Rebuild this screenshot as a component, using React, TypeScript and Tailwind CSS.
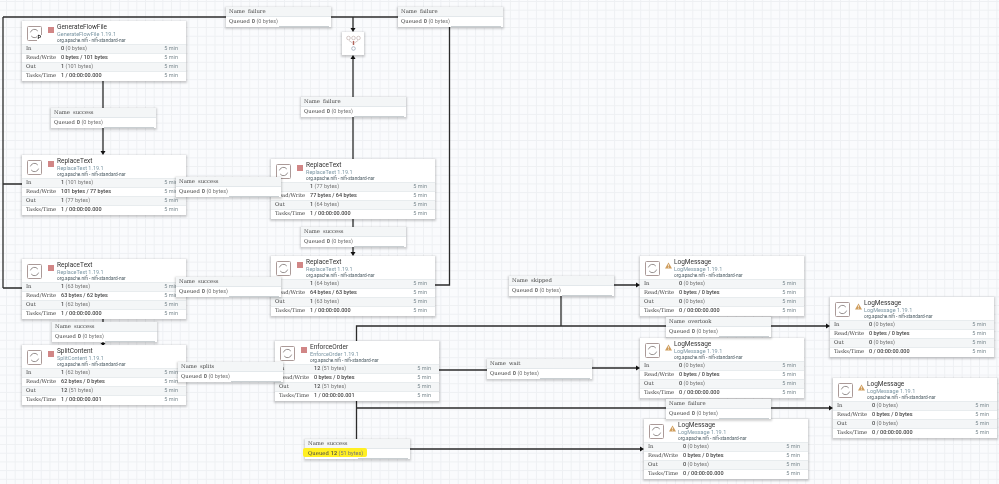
type ProcessorProps = {
  x: number;
  y: number;
  name: string;
  stats: string[][];
  warn?: boolean;
  primary?: boolean;
};

const processors: ProcessorProps[] = [
  { x: 22, y: 21, name: "GenerateFlowFile", primary: true, stats: [["0", "(0 bytes)"], ["0 bytes / 101 bytes"], ["1", "(101 bytes)"], ["1 / 00:00:00.000"]] },
  { x: 22, y: 155, name: "ReplaceText", stats: [["1", "(101 bytes)"], ["101 bytes / 77 bytes"], ["1", "(77 bytes)"], ["1 / 00:00:00.000"]] },
  { x: 22, y: 259, name: "ReplaceText", stats: [["1", "(63 bytes)"], ["63 bytes / 62 bytes"], ["1", "(62 bytes)"], ["1 / 00:00:00.000"]] },
  { x: 22, y: 345, name: "SplitContent", stats: [["1", "(62 bytes)"], ["62 bytes / 0 bytes"], ["12", "(51 bytes)"], ["1 / 00:00:00.001"]] },
  { x: 271, y: 159, name: "ReplaceText", stats: [["1", "(77 bytes)"], ["77 bytes / 64 bytes"], ["1", "(64 bytes)"], ["1 / 00:00:00.000"]] },
  { x: 271, y: 256, name: "ReplaceText", stats: [["1", "(64 bytes)"], ["64 bytes / 63 bytes"], ["1", "(63 bytes)"], ["1 / 00:00:00.000"]] },
  { x: 275, y: 341, name: "EnforceOrder", stats: [["12", "(51 bytes)"], ["0 bytes / 0 bytes"], ["12", "(51 bytes)"], ["1 / 00:00:00.001"]] },
  { x: 640, y: 256, name: "LogMessage", warn: true, stats: [["0", "(0 bytes)"], ["0 bytes / 0 bytes"], ["0", "(0 bytes)"], ["0 / 00:00:00.000"]] },
  { x: 640, y: 338, name: "LogMessage", warn: true, stats: [["0", "(0 bytes)"], ["0 bytes / 0 bytes"], ["0", "(0 bytes)"], ["0 / 00:00:00.000"]] },
  { x: 644, y: 419, name: "LogMessage", warn: true, stats: [["0", "(0 bytes)"], ["0 bytes / 0 bytes"], ["0", "(0 bytes)"], ["0 / 00:00:00.000"]] },
  { x: 830, y: 297, name: "LogMessage", warn: true, stats: [["0", "(0 bytes)"], ["0 bytes / 0 bytes"], ["0", "(0 bytes)"], ["0 / 00:00:00.000"]] },
  { x: 833, y: 378, name: "LogMessage", warn: true, stats: [["0", "(0 bytes)"], ["0 bytes / 0 bytes"], ["0", "(0 bytes)"], ["0 / 00:00:00.000"]] },
];

const connections = [
  { x: 226, y: 7, name: "failure" },
  { x: 398, y: 7, name: "failure" },
  { x: 51, y: 108, name: "success" },
  { x: 176, y: 177, name: "success" },
  { x: 176, y: 277, name: "success" },
  { x: 52, y: 322, name: "success" },
  { x: 178, y: 362, name: "splits" },
  { x: 301, y: 97, name: "failure" },
  { x: 301, y: 227, name: "success" },
  { x: 509, y: 276, name: "skipped" },
  { x: 666, y: 317, name: "overtook" },
  { x: 487, y: 359, name: "wait" },
  { x: 666, y: 399, name: "failure" },
  { x: 305, y: 439, name: "success", queued: "12", bytes: "(51 bytes)", marked: true },
];

const rowLabels = ["In", "Read/Write", "Out", "Tasks/Time"];

function ProcessorIcon() {
  return (
    <svg width="15" height="15" viewBox="0 0 15 15" fill="none" className="shrink-0">
      <rect x="0.5" y="0.5" width="14" height="14" rx="1" stroke="#ab9a98" strokeWidth="1" />
      <path d="M3.4 6.4A4.2 4.2 0 0 1 10.8 5" stroke="#8b8583" strokeWidth="0.9" />
      <path d="M11.6 8.6A4.2 4.2 0 0 1 4.2 10" stroke="#8b8583" strokeWidth="0.9" />
    </svg>
  );
}

function Processor({ x, y, name, stats, warn, primary }: ProcessorProps) {
  return (
    <div
      className="absolute flex h-[60px] w-[164px] flex-col bg-white shadow-[0_1px_2px_1px_rgba(0,0,0,0.2)]"
      style={{ left: x, top: y }}
    >
      <div className="relative flex h-[23px] shrink-0 pl-[5px] pt-[5px]">
        <ProcessorIcon />
        {primary && (
          <span className="absolute left-[15px] top-[14px] bg-white px-[0.5px] font-['Roboto',sans-serif] text-[5.5px] leading-none font-bold text-[#222]">
            P
          </span>
        )}
        {warn ? (
          <svg width="7" height="7" viewBox="0 0 8 7" className="mt-[1px] ml-[5px] shrink-0">
            <path d="M4 0 8 7H0Z" fill="#cf9d5c" />
            <path d="M4 2.2V4.6M4 5.2V6" stroke="#fff" strokeWidth="0.8" />
          </svg>
        ) : (
          <span className="mt-[1px] ml-[6px] h-[6px] w-[6px] shrink-0 bg-[#d18686]" />
        )}
        <div className={warn ? "ml-[2px] -mt-[2px] flex flex-col font-['Roboto',sans-serif]" : "ml-[3px] -mt-[2px] flex flex-col font-['Roboto',sans-serif]"}>
          <span className="h-[7px] text-[6.5px] leading-[7px] whitespace-nowrap text-[#333]">{name}</span>
          <span className="h-[6.5px] text-[5.5px] leading-[6.5px] whitespace-nowrap text-[#7c97a4]">{name} 1.19.1</span>
          <span className="h-[6.5px] text-[4.7px] leading-[6.5px] whitespace-nowrap text-[#4a5a62]">
            org.apache.nifi - nifi-standard-nar
          </span>
        </div>
      </div>
      <div className="flex flex-1 flex-col pb-[1px]">
        {rowLabels.map((label, i) => (
          <div
            key={label}
            className={
              i % 2 === 0
                ? "flex flex-1 items-center border-t border-[#e8ecee] bg-[#f4f6f7] pl-[4px] pr-[8px]"
                : "flex flex-1 items-center border-t border-[#e8ecee] bg-white pl-[4px] pr-[8px]"
            }
          >
            <span className="w-[35px] font-['DejaVu_Serif',serif] text-[5.3px] leading-none whitespace-nowrap text-[#444]">{label}</span>
            <span className="flex-1 font-['Roboto',sans-serif] text-[5.5px] leading-none text-[#444]">
              {stats[i].length > 1 ? (
                <>
                  <span className="font-medium">{stats[i][0]}</span>{" "}
                  <span className="text-[#777]">{stats[i][1]}</span>
                </>
              ) : (
                <span className="font-medium">{stats[i][0]}</span>
              )}
            </span>
            <span className="font-['Roboto',sans-serif] text-[5.5px] leading-none text-[#7d8b91]">5 min</span>
          </div>
        ))}
      </div>
    </div>
  );
}

type ConnectionProps = {
  x: number;
  y: number;
  name: string;
  queued?: string;
  bytes?: string;
  marked?: boolean;
};

function Connection({ x, y, name, queued = "0", bytes = "(0 bytes)", marked }: ConnectionProps) {
  return (
    <div
      className="absolute z-10 flex h-[20px] w-[105px] flex-col bg-white shadow-[0_1px_2px_1px_rgba(0,0,0,0.18)]"
      style={{ left: x, top: y }}
    >
      <div className="flex h-[10px] items-center gap-[3px] border-b border-[#e3e8eb] bg-[#f4f6f7] pl-[3px] font-['DejaVu_Serif',serif] text-[5.3px] leading-none text-[#444]">
        <span>Name</span>
        <span className="font-medium">{name}</span>
      </div>
      <div className="relative flex flex-1 items-center pl-[3px] font-['DejaVu_Serif',serif] text-[5.3px] leading-none text-[#444]">
        {marked && <span className="absolute -left-[2px] -top-[1px] h-[9px] w-[64px] rounded-[2px] bg-[#ffef22]" />}
        <span className="relative">Queued</span>
        <span className="relative ml-[2px] font-['Roboto',sans-serif] text-[5.5px] font-medium">{queued}</span>
        <span className="relative ml-[1.5px] font-['Roboto',sans-serif] text-[5.5px] text-[#777]">{bytes}</span>
        <span className="absolute bottom-0 right-[2px] h-[1px] w-[50px] bg-[#c9cfd2]" />
      </div>
    </div>
  );
}

function Wires() {
  const lines = [
    "M3 17H226M331 17H398M3 17V288M3 184H22M3 288H22",
    "M103 81V108M103 127V151M103 319V322M103 342V343",
    "M353 17V29M353 58V97M353 116V159M353 218V228M353 247V252",
    "M449.5 27V285H435",
    "M356.5 341V326H666M770 326H826M561 295V326",
    "M614 285H636M438 370H487M591 368H636",
    "M356.5 400V439M356.5 408H666M770 408H829M409 449H640",
  ];
  const arrows = [
    "M100.5 151H105.5L103 155Z",
    "M100.5 343H105.5L103 346Z",
    "M350.5 28H355.5L353 32Z",
    "M350.5 59H355.5L353 55Z",
    "M350.5 252H355.5L353 256Z",
    "M636 282.5V287.5L640 285Z",
    "M636 365.5V370.5L640 368Z",
    "M640 446.5V451.5L644 449Z",
    "M826 323.5V328.5L830 326Z",
    "M829 405.5V410.5L833 408Z",
  ];
  return (
    <svg width="999" height="484" viewBox="0 0 999 484" fill="none" className="absolute inset-0">
      <path d={lines.join("")} stroke="#2b2b2b" strokeWidth="1.3" />
      <path d={arrows.join("")} fill="#111" />
    </svg>
  );
}

function Funnel() {
  return (
    <div className="absolute left-[342px] top-[32px] flex h-[23px] w-[22px] items-start justify-center bg-white pt-[3px] shadow-[0_1px_2px_1px_rgba(0,0,0,0.2)]">
      <svg width="15" height="16" viewBox="0 0 15 16" fill="none">
        <circle cx="2.5" cy="3" r="1.8" stroke="#c2b0ae" strokeWidth="0.7" />
        <circle cx="7.5" cy="3" r="1.8" stroke="#c2b0ae" strokeWidth="0.7" />
        <circle cx="12.5" cy="3" r="1.8" stroke="#c2b0ae" strokeWidth="0.7" />
        <path d="M3 5.5 6.5 8M12 5.5 8.5 8" stroke="#c2b0ae" strokeWidth="0.7" />
        <path d="M7.5 6V10" stroke="#b0635a" strokeWidth="1.4" />
        <circle cx="7.5" cy="13.5" r="1.8" stroke="#8f9fb0" strokeWidth="0.7" />
      </svg>
    </div>
  );
}

export default function App() {
  return (
    <div className="relative h-[484px] w-[999px] overflow-hidden bg-[#fafbfd] bg-[linear-gradient(#eef0f3_1px,transparent_1px),linear-gradient(90deg,#eef0f3_1px,transparent_1px)] bg-[size:8.7px_8.7px] bg-[position:6px_1px] blur-[0.3px]">
      <Wires />
      <Funnel />
      {processors.map((p) => (
        <Processor key={`${p.x}-${p.y}`} {...p} />
      ))}
      {connections.map((c) => (
        <Connection key={`${c.x}-${c.y}`} {...c} />
      ))}
    </div>
  );
}
